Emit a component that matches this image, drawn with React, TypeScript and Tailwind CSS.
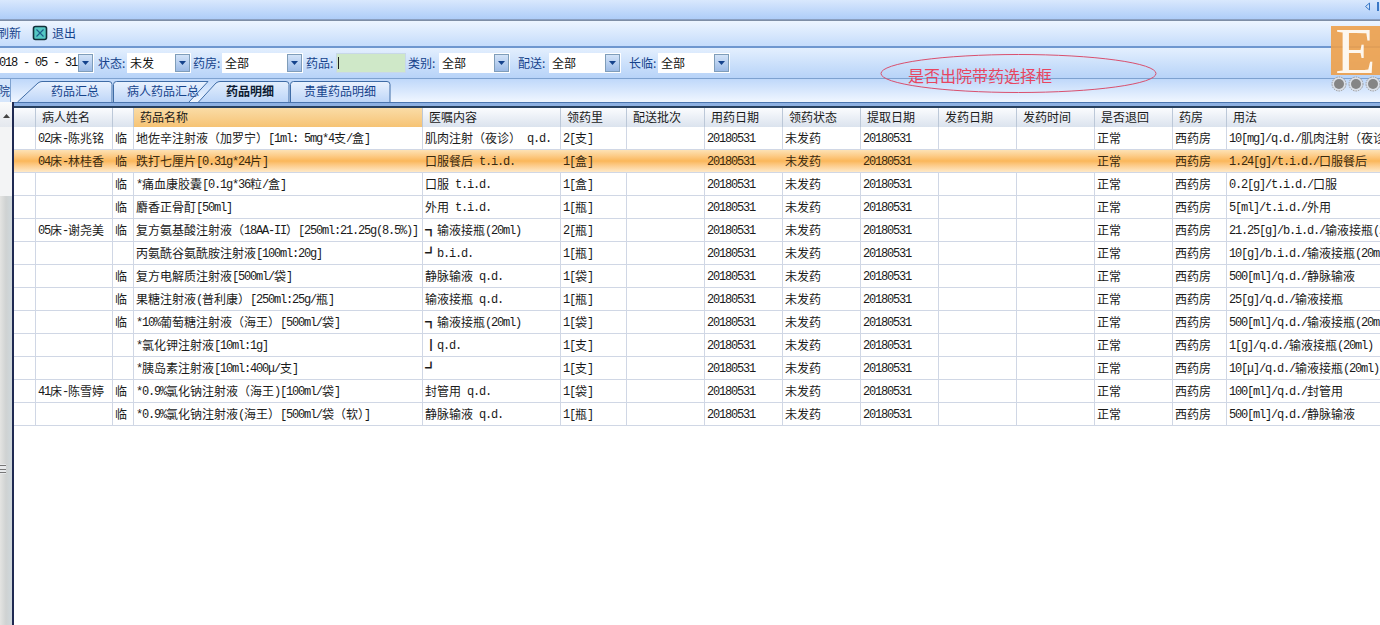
import React from "react";

const CJK = "font-['Noto_Sans_CJK_SC','Noto_Sans_CJK_JP',sans-serif]";

function T({ s }: { s: string }) {
  const parts = s.split(/([\x20-\x7eμ]+)/).filter(Boolean);
  return (
    <>
      {parts.map((p, i) =>
        /^[\x20-\x7eμ]+$/.test(p) ? (
          <span key={i} className="align-[1px] font-['Liberation_Mono',monospace] text-[12px] tracking-[-1.2px]">
            {p}
          </span>
        ) : (
          <span key={i}>{p}</span>
        )
      )}
    </>
  );
}

const widths = [22, 77, 21, 289, 138, 66, 78, 78, 78, 78, 78, 78, 78, 54];
const headers = ["", "病人姓名", "", "药品名称", "医嘱内容", "领药里", "配送批次", "用药日期", "领药状态", "提取日期", "发药日期", "发药时间", "是否退回", "药房", "用法"];

const rows: [string, string, string, string, string, string][] = [
  ["02床-陈兆铭", "临", "地佐辛注射液（加罗宁）[1ml: 5mg*4支/盒]", "肌肉注射（夜诊） q.d.", "2[支]", "10[mg]/q.d./肌肉注射（夜诊）"],
  ["04床-林桂香", "临", "跌打七厘片[0.31g*24片]", "口服餐后 t.i.d.", "1[盒]", "1.24[g]/t.i.d./口服餐后"],
  ["", "临", "*痛血康胶囊[0.1g*36粒/盒]", "口服 t.i.d.", "1[盒]", "0.2[g]/t.i.d./口服"],
  ["", "临", "麝香正骨酊[50ml]", "外用 t.i.d.", "1[瓶]", "5[ml]/t.i.d./外用"],
  ["05床-谢尧美", "临", "复方氨基酸注射液（18AA-II）[250ml:21.25g(8.5%)]", "┓输液接瓶(20ml)", "2[瓶]", "21.25[g]/b.i.d./输液接瓶(20ml)"],
  ["", "", "丙氨酰谷氨酰胺注射液[100ml:20g]", "┛b.i.d.", "1[瓶]", "10[g]/b.i.d./输液接瓶(20ml)"],
  ["", "临", "复方电解质注射液[500ml/袋]", "静脉输液 q.d.", "1[袋]", "500[ml]/q.d./静脉输液"],
  ["", "临", "果糖注射液(普利康）[250ml:25g/瓶]", "输液接瓶 q.d.", "1[瓶]", "25[g]/q.d./输液接瓶"],
  ["", "临", "*10%葡萄糖注射液（海王）[500ml/袋]", "┓输液接瓶(20ml)", "1[袋]", "500[ml]/q.d./输液接瓶(20ml)"],
  ["", "", "*氯化钾注射液[10ml:1g]", "┃q.d.", "1[支]", "1[g]/q.d./输液接瓶(20ml)"],
  ["", "", "*胰岛素注射液[10ml:400μ/支]", "┛", "1[支]", "10[μ]/q.d./输液接瓶(20ml)"],
  ["41床-陈雪婷", "临", "*0.9%氯化钠注射液（海王)[100ml/袋]", "封管用 q.d.", "1[袋]", "100[ml]/q.d./封管用"],
  ["", "临", "*0.9%氯化钠注射液(海王）[500ml/袋（软）]", "静脉输液 q.d.", "1[瓶]", "500[ml]/q.d./静脉输液"],
];

function Caret() {
  return (
    <span className="flex h-[18px] w-[15px] shrink-0 items-center justify-center border border-[#7f9db9] bg-gradient-to-b from-[#d3e3f8] to-[#9dbbe6]">
      <svg width="7" height="4" viewBox="0 0 7 4">
        <path d="M0 0H7L3.5 4Z" fill="#15428b" />
      </svg>
    </span>
  );
}

function Select({ value, className }: { value: string; className: string }) {
  return (
    <div className={`flex h-[20px] shrink-0 items-center justify-between bg-white pl-[3px] pr-px text-[12px] text-[#111] ${className}`}>
      <span>{value}</span>
      <Caret />
    </div>
  );
}

function Label({ children, className }: { children: string; className: string }) {
  return <span className={`shrink-0 whitespace-pre text-[12px] text-[#15428b] ${className}`}>{children}</span>;
}

function Tab({
  label,
  width,
  path,
  active,
  className,
  id,
}: {
  label: string;
  width: number;
  path: string;
  active?: boolean;
  className: string;
  id: string;
}) {
  return (
    <div className={`relative h-[21px] shrink-0 ${className}`}>
      <svg className="absolute inset-0" width={width} height={21} viewBox={`0 0 ${width} 21`}>
        <defs>
          <linearGradient id={id} x1="0" y1="0" x2="0" y2="1">
            <stop offset="0" stopColor={active ? "#e4effd" : "#eaf2fe"} />
            <stop offset="1" stopColor={active ? "#bcd5f8" : "#bed6f8"} />
          </linearGradient>
        </defs>
        <path d={path} fill={`url(#${id})`} stroke="#3f6ca6" strokeWidth="1" />
      </svg>
      <span className={`absolute top-[1px] text-[12px] leading-[18px] ${active ? "left-[28px] font-bold text-[#0d1c33]" : "text-[#15428b]"} ${id === "t1" ? "left-[34px]" : ""} ${id === "t2" ? "left-[14px]" : ""} ${id === "t4" ? "left-[14px]" : ""}`}>
        {label}
      </span>
    </div>
  );
}

export default function App() {
  return (
    <div className={`relative h-[625px] w-[1380px] overflow-hidden bg-white ${CJK}`}>
      {/* title strip */}
      <div className="flex h-[20px] items-start justify-end border-b border-[#8a9fc0] bg-gradient-to-b from-[#d9e8fd] to-[#aecdf8] pr-px pt-[2px]">
        <svg width="14" height="9" viewBox="0 0 14 9">
          <path d="M4.5 1L0.5 4.5L4.5 8Z" fill="#cfe2fb" stroke="#3a78c6" />
          <path d="M13 0V9" stroke="#3a78c6" strokeWidth="2" />
        </svg>
      </div>

      {/* toolbar */}
      <div className="flex h-[26px] items-center border-t border-[#7e8ea6] bg-gradient-to-b from-[#edf5ff] to-[#c5dcfb] pb-[2px]">
        <span className="ml-[-3px] text-[12px] text-[#15428b]">刷新</span>
        <svg className="ml-[11px]" width="16" height="16" viewBox="0 0 16 16">
          <rect x="1.5" y="1.5" width="13" height="13" rx="2" fill="#54c8c4" stroke="#12303a" strokeWidth="1.6" />
          <path d="M4.5 4.5L11.5 11.5M11.5 4.5L4.5 11.5" stroke="#1d5c8a" strokeWidth="1.1" />
        </svg>
        <span className="ml-[4px] text-[12px] text-[#15428b]">退出</span>
      </div>

      {/* filter bar */}
      <div className="flex h-[32px] items-center border-t-2 border-[#6f97cf] bg-gradient-to-b from-[#e3effe] to-[#b7d3f8] pb-px">
        <div className="ml-[-8px] flex h-[20px] w-[102px] shrink-0 items-center justify-between bg-white pl-px pr-px text-[#111]">
          <span className="whitespace-pre text-[12px]"><T s="2018 - 05 - 31" /></span>
          <Caret />
        </div>
        <Label className="ml-[4px] w-[29px]">{"状态:"}</Label>
        <Select value="未发" className="w-[64px]" />
        <Label className="ml-[2px] w-[29px]">{"药房:"}</Label>
        <Select value="全部" className="w-[81px]" />
        <Label className="ml-[3px] w-[30px]">{"药品:"}</Label>
        <div className="flex h-[20px] w-[70px] shrink-0 items-center border border-[#c8d8e8] bg-[#cfe8c8] pl-[1px]">
          <span className="h-[12px] w-px bg-[#222]" />
        </div>
        <Label className="ml-[2px] w-[31px]">{"类别:"}</Label>
        <Select value="全部" className="w-[71px]" />
        <Label className="ml-[8px] w-[31px]">{"配送:"}</Label>
        <Select value="全部" className="w-[72px]" />
        <Label className="ml-[8px] w-[29px]">{"长临:"}</Label>
        <Select value="全部" className="w-[72px]" />
      </div>

      {/* tabs */}
      <div className="flex h-[24px] items-end border-t border-[#7ea2d0] bg-gradient-to-b from-[#bfd8fa] to-[#f0f6ff]">
        <div className="flex h-[23px] w-[11px] shrink-0 items-center justify-end overflow-hidden border-r border-[#7ea2d0] bg-[#d6e6fb] text-[12px] text-[#15428b]">院</div>
        <Tab id="t1" label="药品汇总" width={96} className="ml-[6px] w-[96px]" path="M0.5 21L21 2Q23 0.5 25 0.5H92Q95 0.5 95 3.5V21" />
        <Tab id="t2" label="病人药品汇总" width={96} className="w-[96px]" path="M0.5 21V3.5Q0.5 0.5 3.5 0.5H95L76 21" />
        <Tab id="t3" label="药品明细" width={92} active className="ml-[-11px] w-[92px]" path="M0.5 21L18 2Q20 0.5 22 0.5H88Q91 0.5 91 3.5V21" />
        <Tab id="t4" label="贵重药品明细" width={101} className="w-[101px]" path="M0.5 21V3.5Q0.5 0.5 3.5 0.5H97Q100 0.5 100 3.5V21" />
      </div>

      {/* body */}
      <div className="flex h-[523px]">
        <div className="flex w-[12px] shrink-0 flex-col">
          <div className="flex h-[25px] items-center justify-center bg-gradient-to-b from-[#fbfbfb] to-[#e4e8ee] pt-[2px]">
            <svg width="7" height="4" viewBox="0 0 7 4">
              <path d="M3.5 0L7 4H0Z" fill="#444" />
            </svg>
          </div>
          <div className="h-[69px] bg-[#f3f4f5]" />
          <div className="flex-1 bg-gradient-to-r from-[#e4e4e2] via-[#cfd2d2] to-[#cfd8dc] pt-[268px]">
            <div className="flex h-[10px] w-[6px] flex-col justify-between bg-[#e8eaec] py-px">
              <span className="h-px bg-[#777]" />
              <span className="h-px bg-[#777]" />
              <span className="h-px bg-[#777]" />
            </div>
          </div>
        </div>
        <div className="flex min-w-0 flex-1 flex-col border-l-2 border-[#1f2a52]">
          <div className="h-[4px] shrink-0 border-t border-[#4a74ad] bg-[#8db0e2]" />
          {/* header */}
          <div className="flex h-[21px] shrink-0 border-t-2 border-[#27405f] bg-gradient-to-b from-[#fbfcfe] to-[#dbe3ee]">
            {headers.map((h, i) => (
              <div
                key={i}
                style={i < widths.length ? { width: widths[i] } : undefined}
                className={`${i === widths.length ? "flex-1" : "shrink-0 border-r border-[#bcc8d8]"} overflow-hidden whitespace-pre pl-[6px] text-[12px] leading-[17px] text-[#1a1a1a] ${i === 3 ? "bg-gradient-to-b from-[#fadca6] to-[#f6c374]" : ""}`}
              >
                {h}
              </div>
            ))}
          </div>
          {/* rows */}
          {rows.map((r, idx) => {
            const cells = [
              "",
              r[0],
              r[1],
              r[2],
              r[3],
              r[4],
              "",
              "20180531",
              "未发药",
              "20180531",
              "",
              "",
              "正常",
              "西药房",
              r[5],
            ];
            const sel = idx === 1;
            return (
              <div
                key={idx}
                className={`flex h-[23px] shrink-0 border-b border-[#d0d7e5] ${sel ? "bg-gradient-to-b from-[#fde2b4] via-[#fbb75a] to-[#fee9c8]" : ""}`}
              >
                {cells.map((c, i) => (
                  <div
                    key={i}
                    style={i < widths.length ? { width: widths[i] } : undefined}
                    className={`${i === widths.length ? "flex-1" : "shrink-0"} overflow-hidden whitespace-pre pl-[2px] text-[12px] leading-[22px] ${sel ? "text-[#3a2a10]" : "text-[#1a1a1a]"} ${sel || i === widths.length ? "" : "border-r border-[#d0d7e5]"}`}
                  >
                    <T s={c} />
                  </div>
                ))}
              </div>
            );
          })}
        </div>
      </div>

      {/* annotation overlay */}
      <svg className="absolute left-[880px] top-[53px]" width="278" height="41" viewBox="0 0 278 41">
        <ellipse cx="138.5" cy="20.5" rx="137.5" ry="19" fill="none" stroke="#d9506e" strokeWidth="1" />
      </svg>
      <span className="absolute left-[908px] top-[64px] text-[16px] leading-[22px] text-[#e8455f]">是否出院带药选择框</span>

      {/* logo */}
      <div className="absolute left-[1331px] top-[26px] flex h-[49px] w-[49px] items-center justify-center overflow-hidden bg-[#eda04a]/90 font-['Liberation_Serif',serif] text-[66px] leading-[49px] text-[#fdf7ef]">
        E
      </div>
      <svg className="absolute left-[1331px] top-[76px]" width="49" height="17" viewBox="0 0 49 17">
        {[8, 25, 42].map((x) => (
          <g key={x}>
            <circle cx={x} cy="8" r="7" fill="#dbe0e8" stroke="#9a9a9a" strokeDasharray="1.5 1" />
            <circle cx={x} cy="8" r="5" fill="#858585" />
          </g>
        ))}
      </svg>
    </div>
  );
}
